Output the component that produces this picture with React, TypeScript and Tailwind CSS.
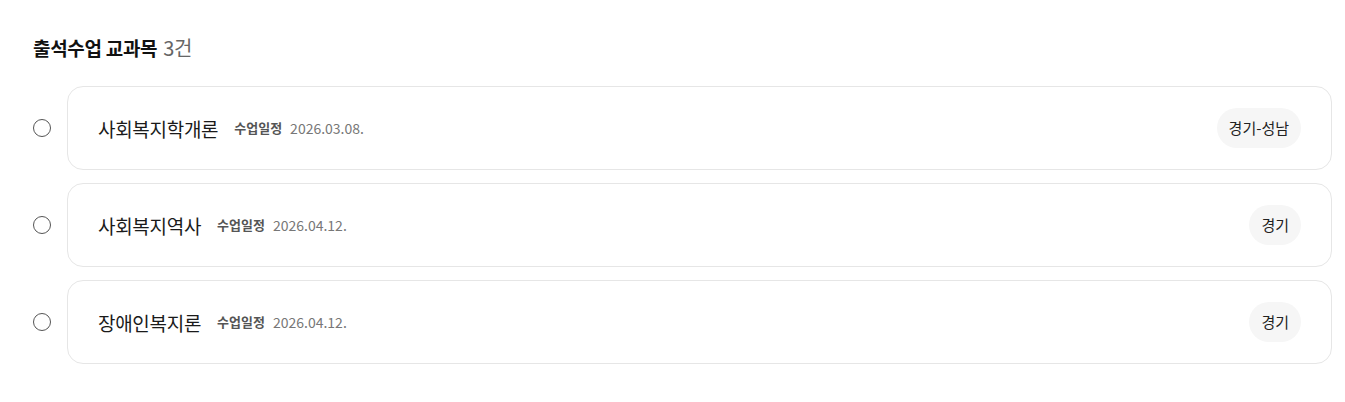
const courses = [
  { name: "사회복지학개론", date: "2026.03.08.", region: "경기-성남" },
  { name: "사회복지역사", date: "2026.04.12.", region: "경기" },
  { name: "장애인복지론", date: "2026.04.12.", region: "경기" },
];

export default function App() {
  return (
    <div
      className="min-h-screen bg-white pl-[33px] pr-[13px] pt-[35px] text-[#111]"
      style={{ fontFamily: '"Noto Sans CJK KR", "Noto Sans", sans-serif' }}
    >
      {/* Header */}
      <h2 className="flex items-baseline text-[19px] font-bold leading-[26px] tracking-[-0.3px]">
        출석수업 교과목
        <span className="ml-[6px] text-[20px] font-normal text-[#666]">3건</span>
      </h2>

      <ul className="mt-[25px] flex flex-col gap-[13px]">
        {courses.map((c) => (
          <li key={c.name} className="flex items-center gap-[16px]">
            <span className="h-[18px] w-[18px] shrink-0 rounded-full border border-[#555] bg-white" />
            <div className="flex h-[84px] flex-1 items-center justify-between rounded-[16px] border border-[#e6e6e6] bg-white pl-[30px] pr-[30px]">
              <div className="flex items-center">
                <span className="text-[19px] font-normal leading-none tracking-[-0.3px] text-[#1a1a1a]">
                  {c.name}
                </span>
                <span className="ml-[16px] text-[13px] font-bold text-[#555]">수업일정</span>
                <span className="ml-[8px] text-[14px] text-[#777]">{c.date}</span>
              </div>
              <span className="rounded-full bg-[#f6f6f6] px-[12px] py-[9px] text-[15px] leading-[22px] text-[#222]">
                {c.region}
              </span>
            </div>
          </li>
        ))}
      </ul>
    </div>
  );
}
